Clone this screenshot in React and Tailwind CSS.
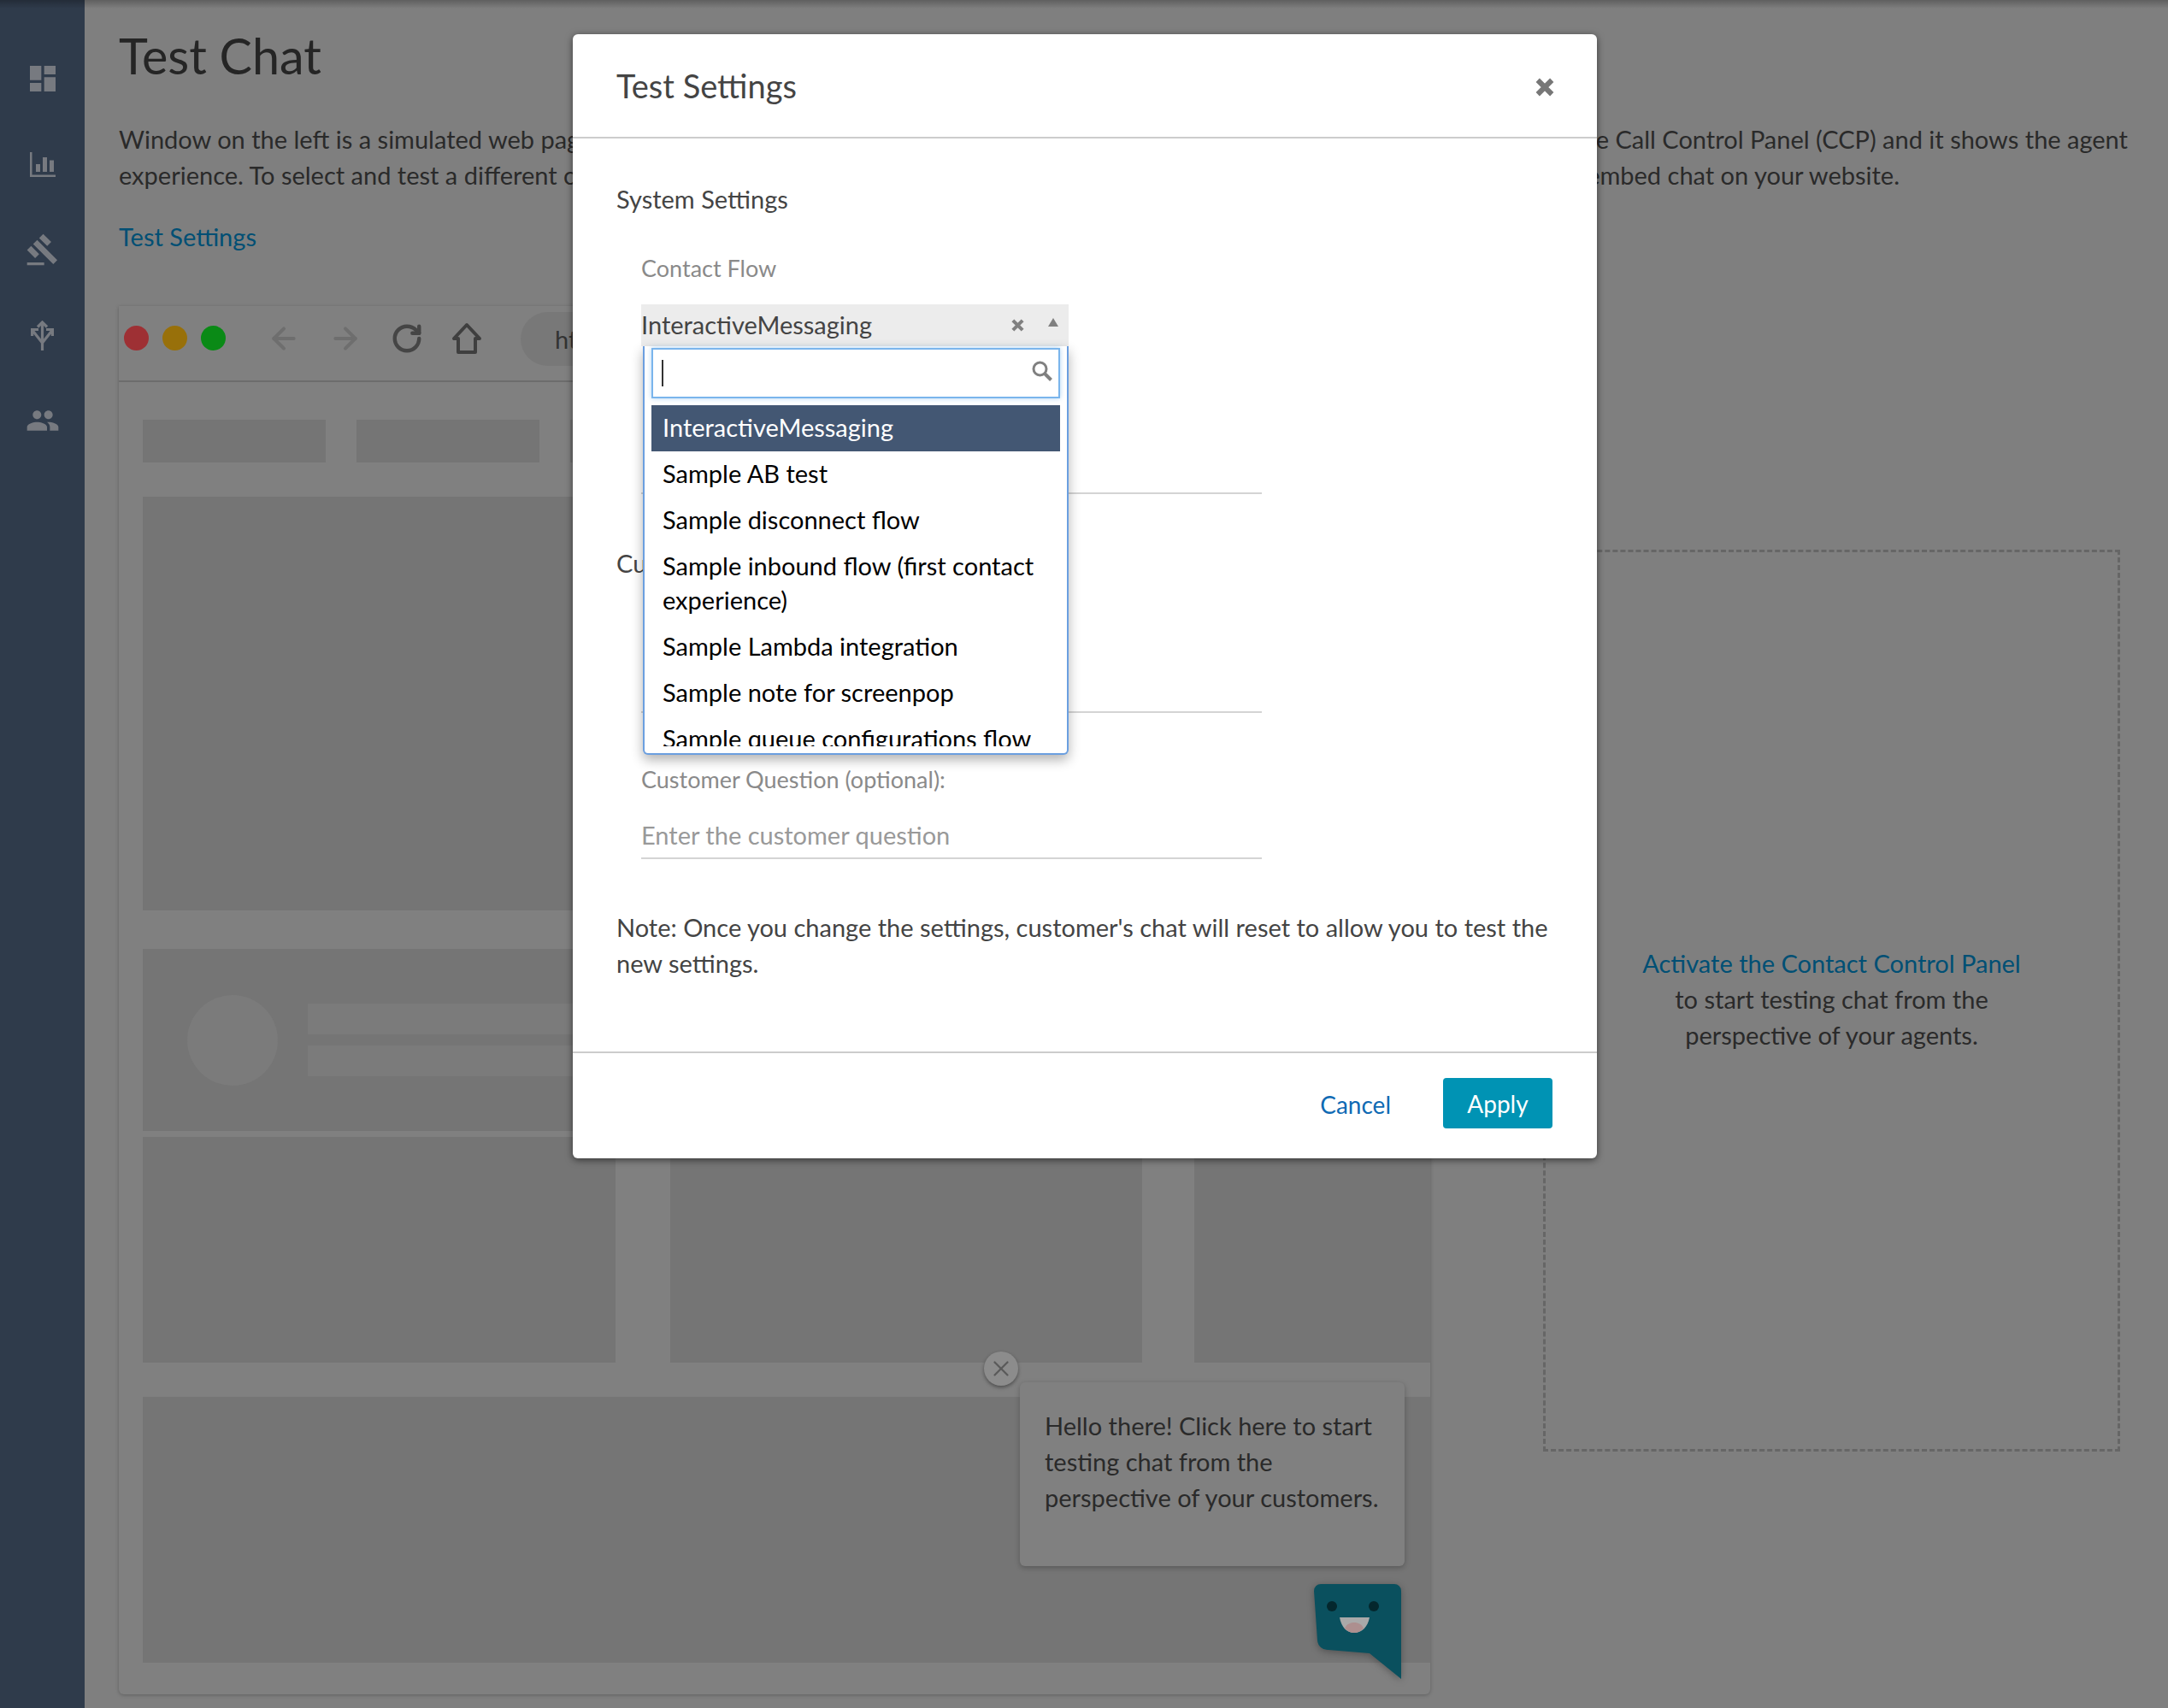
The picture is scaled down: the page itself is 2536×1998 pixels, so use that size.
import React from "react";
import { MdDashboard, MdGavel, MdPeople } from "react-icons/md";
import { ArrowLeft, ArrowRight, RotateCw, X } from "lucide-react";

const navIconClass = "h-[40px] w-[40px] text-[#777a80]";

const ChartIcon = () => (
  <svg viewBox="0 0 30 29" className="h-[29px] w-[30px] text-[#777a80]" fill="currentColor">
    <path d="M0 0h2.5v26.5H30V29H0z" />
    <path d="M7 14h5v9H7zM15 6h5v17h-5zM23 9.5h5V23h-5z" />
  </svg>
);

const RoutingIcon = () => (
  <svg viewBox="0 0 27 35" className="h-[35px] w-[27px] text-[#777a80]" fill="none" stroke="currentColor" strokeWidth="3.2">
    <path d="M13.5 35V2M8 7.5l5.5-5.5L19 7.5" />
    <path d="M13.5 26 2 11.5M1.6 18v-7.5H9" />
    <path d="M13.5 26 25 11.5M25.4 18v-7.5H18" />
  </svg>
);

const HomeIcon = () => (
  <svg viewBox="0 0 36 38" className="h-[38px] w-[36px] text-[#3f3f3f]" fill="none" stroke="currentColor" strokeWidth="4" strokeLinejoin="round">
    <path d="M18 3 3 19h5v16h20V19h5z" />
  </svg>
);

const SearchIcon = () => (
  <svg viewBox="0 0 24 24" className="h-[24px] w-[24px] text-[#808080]" fill="none" stroke="currentColor">
    <circle cx="9.5" cy="9.5" r="7.5" strokeWidth="3" />
    <path d="M15 15l7.5 7.5" strokeWidth="4" />
  </svg>
);

const CrossIcon = ({ className }) => (
  <svg viewBox="0 0 20 20" className={className} fill="none" stroke="currentColor" strokeWidth="5.5">
    <path d="M2.5 2.5l15 15M17.5 2.5l-15 15" />
  </svg>
);

const ChatBubble = () => (
  <svg viewBox="0 0 102 112" className="h-[112px] w-[102px] drop-shadow-[0_2px_4px_rgba(0,0,0,0.3)]">
    <path d="M8 0h86a8 8 0 0 1 8 8v103L65 81 17 77a12 12 0 0 1-13-11L0 8a8 8 0 0 1 8-8z" fill="#0a505e" />
    <circle cx="21" cy="26" r="6" fill="#04272d" />
    <circle cx="70" cy="26" r="6" fill="#04272d" />
    <path d="M30 39h35c-2 11-9 18-18 18s-15-7-17-18z" fill="#a9a9a9" />
    <path d="M36 52c2-5 6-7 11-7s9 2 11 7c-3 3-7 5-11 5s-8-2-11-5z" fill="#ad8f8f" />
  </svg>
);

const Block = ({ className }) => <div className={`bg-[#757575] ${className}`} />;

const flows = [
  "Sample AB test",
  "Sample disconnect flow",
  "Sample inbound flow (first contact experience)",
  "Sample Lambda integration",
  "Sample note for screenpop",
  "Sample queue configurations flow",
];

const BrowserMock = () => (
  <div className="h-[1624px] w-[1534px] shrink-0 rounded-b-md bg-[#808080] shadow-[0_1px_4px_rgba(0,0,0,0.25)]">
    <div className="flex h-[89px] items-start border-b-2 border-[#6c6c6c]">
      <div className="mt-[23px] ml-[6px] flex gap-[16px]">
        <span className="h-[29px] w-[29px] rounded-full bg-[#9e3034]" />
        <span className="h-[29px] w-[29px] rounded-full bg-[#98700a]" />
        <span className="h-[29px] w-[29px] rounded-full bg-[#0a8a16]" />
      </div>
      <ArrowLeft className="mt-[18px] ml-[48px] h-[40px] w-[40px] text-[#6e6e6e]" strokeWidth={2.4} />
      <ArrowRight className="mt-[18px] ml-[32px] h-[40px] w-[40px] text-[#6e6e6e]" strokeWidth={2.4} />
      <RotateCw className="mt-[19px] ml-[33px] h-[38px] w-[38px] text-[#454545]" strokeWidth={2.8} />
      <div className="mt-[19px] ml-[33px]"><HomeIcon /></div>
      <div className="mt-[7px] ml-[45px] flex h-[63px] w-[700px] items-center rounded-full bg-[#787878] pl-[40px] text-[#333333]">
        https://
      </div>
    </div>
    <div className="pt-[44px] pl-[28px]">
      <div className="flex gap-[36px]">
        <Block className="h-[50px] w-[214px]" />
        <Block className="h-[50px] w-[214px]" />
        <Block className="h-[50px] w-[214px]" />
      </div>
      <Block className="mt-[40px] h-[484px]" />
      <div className="mt-[45px] flex h-[213px] items-center bg-[#757575] pl-[52px]">
        <span className="h-[106px] w-[106px] rounded-full bg-[#7b7b7b]" />
        <div className="ml-[35px] flex flex-col gap-[13px]">
          <span className="h-[36px] w-[500px] bg-[#7b7b7b]" />
          <span className="h-[36px] w-[500px] bg-[#7b7b7b]" />
        </div>
      </div>
      <div className="mt-[7px] flex h-[264px]">
        <Block className="w-[553px]" />
        <Block className="ml-[64px] w-[552px]" />
        <Block className="ml-[61px] w-[276px]" />
      </div>
      <Block className="mt-[40px] h-[311px]" />
    </div>
  </div>
);

const Dropdown = () => (
  <div className="absolute top-[49px] left-[2px] z-10 h-[478px] w-[498px] rounded-b-md border-x-2 border-b-2 border-[#6b9fe0] bg-white px-[8px] pt-[2px] shadow-[0_6px_14px_rgba(0,0,0,0.3)]">
    <div className="flex h-[59px] items-center justify-between border-2 border-[#7ab5ec] pr-[7px] pl-[10px] shadow-[0_0_6px_rgba(122,181,236,0.6)]">
      <span className="h-[31px] w-[2px] bg-[#333333]" />
      <span className="mb-[6px]"><SearchIcon /></span>
    </div>
    <div className="mt-[8px] h-[399px] overflow-hidden leading-[40px] text-black">
      <div className="bg-[#435773] px-[13px] pt-[6px] pb-[8px] text-white">InteractiveMessaging</div>
      {flows.map((flow) => (
        <div key={flow} className="px-[13px] pt-[6px] pb-[8px]">{flow}</div>
      ))}
    </div>
  </div>
);

const SettingsModal = () => (
  <div className="absolute top-[40px] left-[670px] z-20 flex h-[1315px] w-[1198px] flex-col rounded-md bg-white shadow-[0_2px_8px_rgba(0,0,0,0.55)]">
    <div className="flex h-[122px] shrink-0 items-center justify-between border-b-2 border-[#cccccc] pr-[50px] pl-[51px]">
      <h2 className="text-[38px] text-[#444444]">Test Settings</h2>
      <CrossIcon className="mt-[4px] h-[22px] w-[22px] text-[#777777]" />
    </div>
    <div className="px-[51px] pt-[50px]">
      <h3 className="text-[#444444]">System Settings</h3>
      <div className="ml-[29px] w-[726px]">
        <label className="mt-[39px] block text-[27px] text-[#8a8a8a]">Contact Flow</label>
        <div className="relative mt-[21px] w-[500px]">
          <div className="flex h-[49px] items-center justify-between bg-[#ececec] pr-[12px] pb-[2px] text-[#444444]">
            <span>InteractiveMessaging</span>
            <div className="flex items-center gap-[28px]">
              <CrossIcon className="mt-[2px] h-[15px] w-[15px] text-[#808080]" />
              <span className="mb-[6px] h-0 w-0 border-x-[6px] border-b-[10px] border-x-transparent border-b-[#808080]" />
            </div>
          </div>
          <Dropdown />
        </div>
        <div className="h-[173px] border-b-2 border-[#d4d4d4]" />
      </div>
      <h3 className="mt-[60px] text-[#444444]">Customer Settings</h3>
      <div className="ml-[29px] w-[726px]">
        <div className="h-[154px] border-b-2 border-[#d4d4d4]" />
        <label className="mt-[57px] block text-[27px] text-[#8a8a8a]">Customer Question (optional):</label>
        <div className="mt-[23px] h-[49px] border-b-2 border-[#d4d4d4] text-[#999999]">Enter the customer question</div>
      </div>
      <p className="mt-[59px] text-[#444444]">
        Note: Once you change the settings, customer's chat will reset to allow you to test the new settings.
      </p>
    </div>
    <div className="mt-auto flex h-[125px] shrink-0 items-start justify-end border-t-2 border-[#cccccc] pt-[29px] pr-[52px] text-[28px]">
      <button className="mt-[10px] mr-[61px] text-[#0f6ab4]">Cancel</button>
      <button className="h-[59px] w-[128px] rounded-[4px] bg-[#0093b4] text-white">Apply</button>
    </div>
  </div>
);

export default function App() {
  return (
    <div className="relative flex h-[1998px] w-[2536px] overflow-hidden bg-[#7f7f7f] font-['Lato',sans-serif] text-[29px] leading-[42px] text-[#2a2a2a]">
      <div className="pointer-events-none absolute inset-x-0 top-0 z-0 h-[10px] bg-gradient-to-b from-black/25 to-transparent" />
      <aside className="flex w-[99px] shrink-0 flex-col items-center bg-[#2f3b4b] pt-[72px]">
        <div className="flex h-[40px] items-center"><MdDashboard className={navIconClass} /></div>
        <div className="mt-[60px] flex h-[40px] items-center"><ChartIcon /></div>
        <div className="mt-[60px] flex h-[40px] items-center"><MdGavel className={navIconClass} /></div>
        <div className="mt-[60px] flex h-[40px] items-center"><RoutingIcon /></div>
        <div className="mt-[60px] flex h-[40px] items-center"><MdPeople className={navIconClass} /></div>
      </aside>

      <main className="relative min-w-0 flex-1 pt-[33px] pl-[40px]">
        <h1 className="text-[57.5px] leading-[64px] text-[#252525]">Test Chat</h1>
        <div className="mt-[45px] w-[2350px] text-[#2a2a2a]">
          <div className="flex justify-between whitespace-nowrap">
            <span>Window on the left is a simulated web page</span>
            <span>the Call Control Panel (CCP) and it shows the agent</span>
          </div>
          <div className="flex justify-between whitespace-nowrap">
            <span>experience. To select and test a different contact flow</span>
            <span className="mr-[267px]">embed chat on your website.</span>
          </div>
        </div>
        <a className="mt-[30px] block text-[#004f74]">Test Settings</a>

        <div className="mt-[60px] flex items-start">
          <BrowserMock />
          <div className="mt-[285px] ml-[132px] flex h-[1055px] w-[675px] shrink-0 flex-col items-center justify-center border-[3px] border-dashed border-[#666666] pb-[3px] text-center">
            <a className="text-[#004f74]">Activate the Contact Control Panel</a>
            <p>to start testing chat from the</p>
            <p>perspective of your agents.</p>
          </div>
        </div>
      </main>

      {/* greeting popup and launcher sit over the simulated page */}
      <button className="absolute top-[1581px] left-[1151px] flex h-[40px] w-[40px] items-center justify-center rounded-full bg-[#8c8c8c] shadow-[0_2px_4px_rgba(0,0,0,0.4)]">
        <X className="h-[30px] w-[30px] text-[#5a5a5a]" strokeWidth={1.8} />
      </button>
      <div className="absolute top-[1617px] left-[1193px] h-[215px] w-[450px] rounded-md bg-[#808080] px-[29px] pt-[30px] shadow-[0_2px_6px_rgba(0,0,0,0.25)]">
        <p className="whitespace-nowrap">Hello there! Click here to start</p>
        <p className="whitespace-nowrap">testing chat from the</p>
        <p className="whitespace-nowrap">perspective of your customers.</p>
      </div>
      <div className="absolute top-[1853px] left-[1537px]"><ChatBubble /></div>

      <SettingsModal />
    </div>
  );
}
